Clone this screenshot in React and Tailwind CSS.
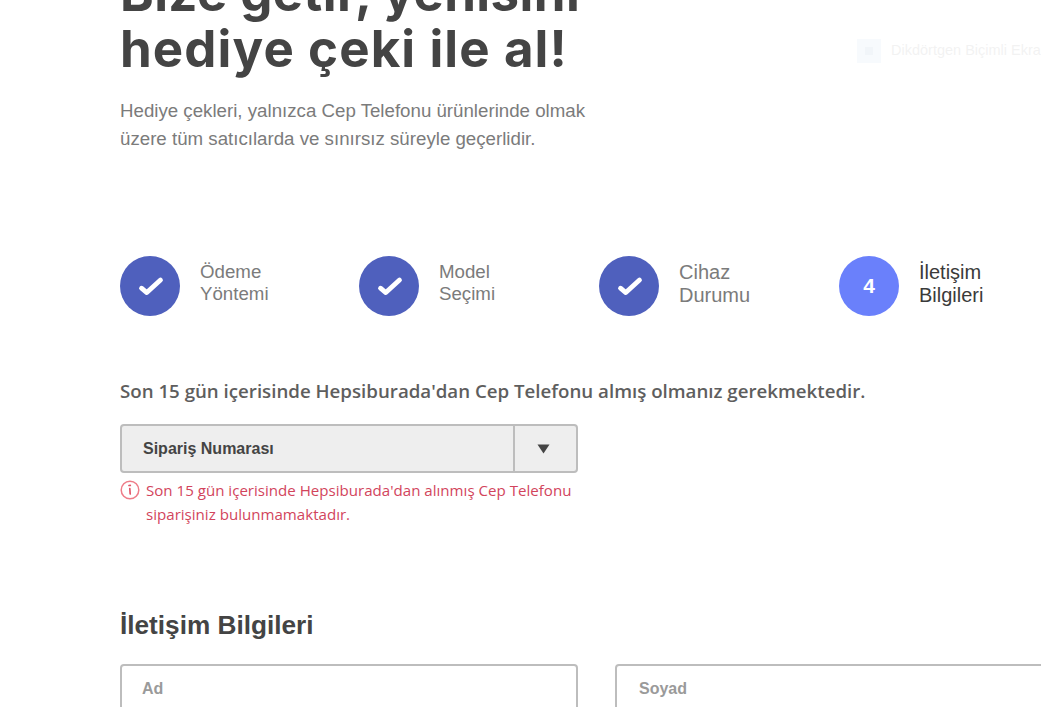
import React from 'react';

const steps = [
  { lines: ['Ödeme', 'Yöntemi'], done: true, w: 'w-[239px]' },
  { lines: ['Model', 'Seçimi'], done: true, w: 'w-[240px]' },
  { lines: ['Cihaz', 'Durumu'], done: true, big: true, w: 'w-[240px]' },
  { lines: ['İletişim', 'Bilgileri'], big: true, active: true, w: 'w-[240px]' },
];

const Check = () => (
  <svg width="30" height="30" viewBox="0 0 30 30" fill="none">
    <path d="M6.5 17.2 L11.8 21.6 L25.5 9" stroke="#fff" strokeWidth="4.8" strokeLinecap="round" strokeLinejoin="round" />
  </svg>
);

const Step = ({ step }) => (
  <div className={`flex items-center shrink-0 ${step.w}`}>
    <div
      className={`w-[60px] h-[60px] rounded-full flex items-center justify-center shrink-0 text-white font-bold text-[21px] ${step.active ? 'bg-[#6a80fb]' : 'bg-[#4f60bd]'}`}
    >
      {step.done ? <Check /> : '4'}
    </div>
    <div
      className={`ml-5 ${step.big ? 'text-[20px] leading-[23px] -mt-[5px]' : 'text-[18.7px] leading-[22px] -mt-[7px]'} ${step.active ? 'text-[#3a3a3a]' : 'text-[#7b7b7b]'}`}
    >
      {step.lines.map((line) => (
        <div key={line}>{line}</div>
      ))}
    </div>
  </div>
);

const App = () => {
  return (
    <div className="relative w-[1041px] h-[707px] overflow-hidden bg-white font-['Liberation_Sans',sans-serif]">
      {/* faint snipping tool overlay */}
      <div className="absolute left-[857px] top-[39px] flex items-center opacity-[0.07]">
        <div className="w-6 h-6 bg-[#9cc4ec] flex items-center justify-center">
          <div className="w-2 h-2 bg-[#4a7fb5]" />
        </div>
        <span className="ml-[10px] text-[14.5px] whitespace-nowrap text-[#555]">Dikdörtgen Biçimli Ekran Alıntısı</span>
      </div>

      <div className="pl-[120px]">
        <h1 className="-mt-[35px] font-['Inter',sans-serif] font-bold text-[51px] leading-[56px] tracking-[1.1px] text-[#444444] whitespace-nowrap">
          <span className="tracking-[0.4px]">Bize getir, yenisini</span>
          <br />
          hediye çeki ile al!
        </h1>
        <p className="mt-[20px] text-[18.7px] leading-[28px] text-[#7b7b7b]">
          Hediye çekleri, yalnızca Cep Telefonu ürünlerinde olmak
          <br />
          üzere tüm satıcılarda ve sınırsız süreyle geçerlidir.
        </p>

        <div className="flex mt-[103px] w-[1000px]">
          {steps.map((step) => (
            <Step key={step.lines[0]} step={step} />
          ))}
        </div>

        <h3 className="mt-[61px] font-['Open_Sans',sans-serif] font-semibold text-[18.7px] leading-[28px] text-[#5e5e5e] whitespace-nowrap">
          Son 15 gün içerisinde Hepsiburada&apos;dan Cep Telefonu almış olmanız gerekmektedir.
        </h3>

        <div className="mt-[19px] w-[458px] h-[49px] flex items-center rounded-[4px] border-2 border-[#bdbdbd] bg-[#eeeeee]">
          <span className="flex-1 pl-[21px] text-[16px] font-bold text-[#444444]">Sipariş Numarası</span>
          <div className="w-[63px] h-full border-l-2 border-[#bdbdbd] flex items-center justify-center pr-[4px]">
            <svg width="13" height="10" viewBox="0 0 13 10">
              <path d="M0.5 0.5 H12.5 L6.5 9.5 Z" fill="#444444" />
            </svg>
          </div>
        </div>

        <div className="flex mt-[5px] w-[458px]">
          <svg width="20" height="20" viewBox="0 0 20 20" fill="none" className="shrink-0 mt-[2px]">
            <circle cx="10" cy="10" r="8.8" stroke="#ee7c88" strokeWidth="1.5" />
            <path d="M9 5.5 L10.3 5.3 M9.8 8.5 L10.2 14" stroke="#e2586a" strokeWidth="1.7" strokeLinecap="round" />
          </svg>
          <p className="ml-[6px] font-['Open_Sans',sans-serif] text-[15.1px] leading-[24px] text-[#d2445c]">
            Son 15 gün içerisinde Hepsiburada&apos;dan alınmış Cep Telefonu siparişiniz bulunmamaktadır.
          </p>
        </div>

        <h2 className="mt-[83px] text-[26.2px] leading-[32px] font-bold text-[#444444]">İletişim Bilgileri</h2>

        <div className="flex gap-[37px] mt-[23px] w-[1100px]">
          <div className="w-[458px] h-[60px] shrink-0 rounded-[4px] border-2 border-[#bdbdbd] pl-[20px] pt-[13px] text-[16px] leading-[20px] font-bold text-[#9a9a9a]">
            Ad
          </div>
          <div className="w-[458px] h-[60px] shrink-0 rounded-[4px] border-2 border-[#bdbdbd] pl-[22px] pt-[13px] text-[16px] leading-[20px] font-bold text-[#9a9a9a]">
            Soyad
          </div>
        </div>
      </div>
    </div>
  );
};

export default App;
